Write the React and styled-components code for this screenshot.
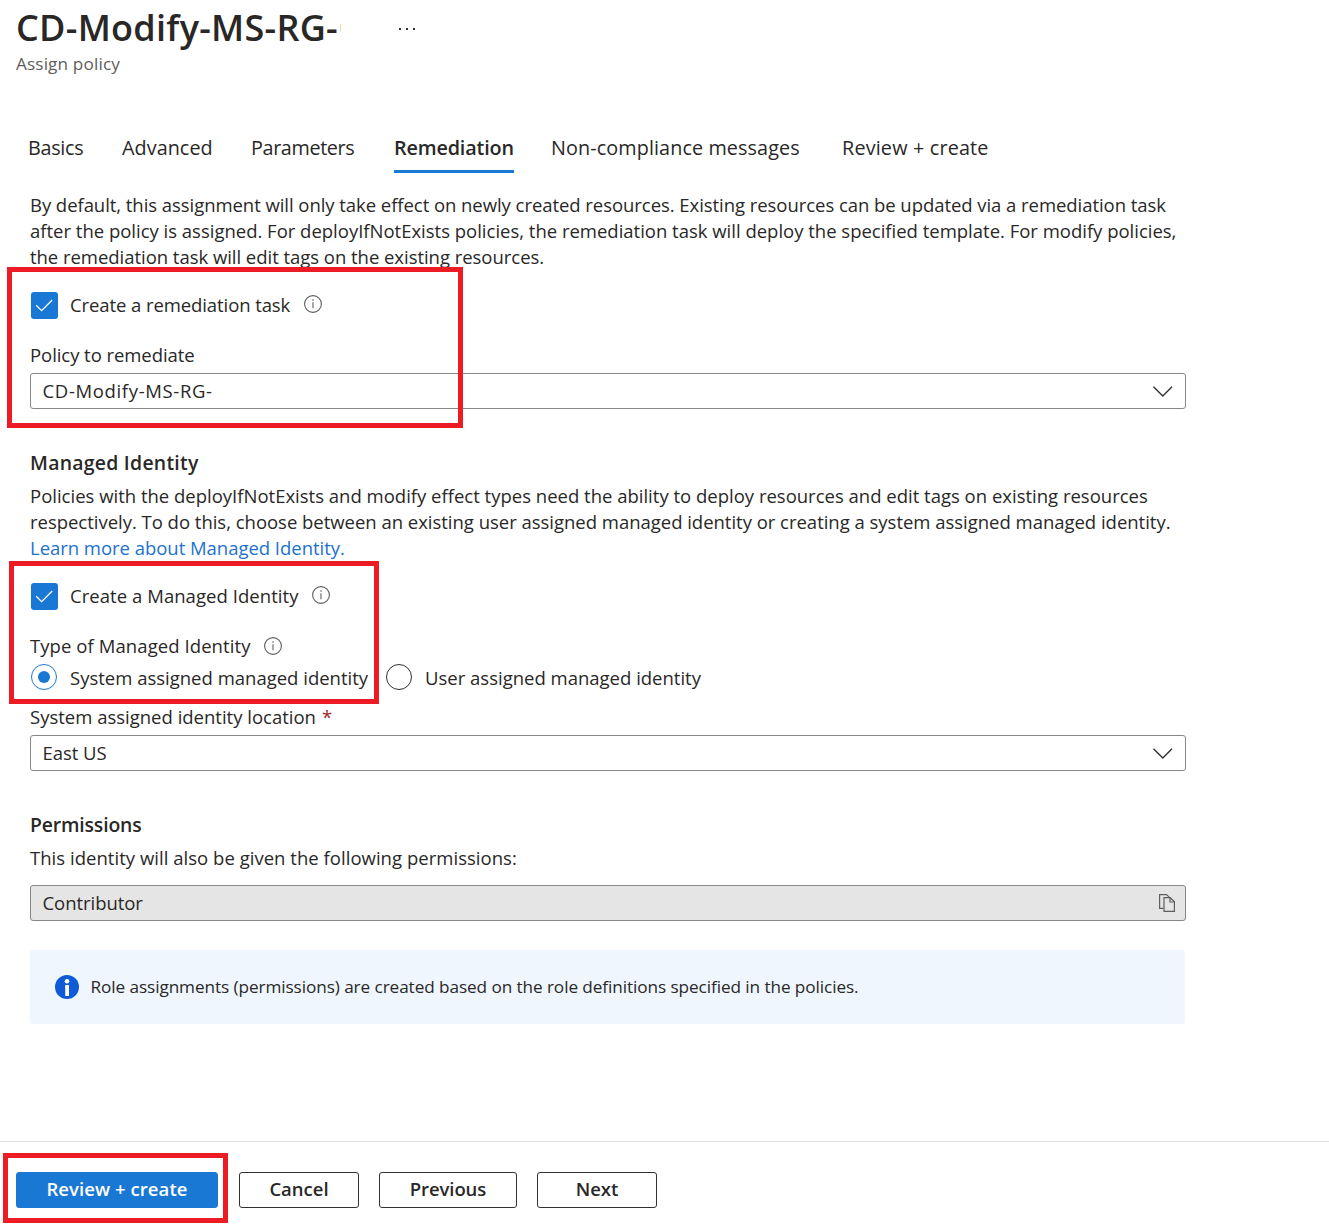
import React, { useState } from "react";
import styled, { createGlobalStyle, css } from "styled-components";

const GlobalStyle = createGlobalStyle`
  *, *::before, *::after { box-sizing: border-box; }
  body {
    margin: 0;
    background: #fff;
    color: #292827;
    font-family: "Open Sans", "Noto Sans", sans-serif;
    font-size: 18.5px;
    line-height: 26px;
  }
`;

const Page = styled.div`
  position: relative;
  width: 1329px;
  height: 1232px;
  display: flex;
  flex-direction: column;
  overflow: hidden;
`;

const Text = styled.span`
  display: ${(p) => (p.$line ? "block" : "inline")};
  white-space: nowrap;
  letter-spacing: ${(p) => p.$ls || 0}px;
`;

const Header = styled.header`
  height: 128px;
  padding: 4px 16px 0;
`;

const TitleRow = styled.div`
  display: flex;
  align-items: center;
  height: 48px;
`;

const Title = styled.h1`
  display: flex;
  align-items: center;
  width: 325px;
  margin: 0 57px 0 0;
  font-size: 36px;
  line-height: 48px;
  font-weight: 600;

  &::after {
    content: "";
    width: 1px;
    height: 8px;
    margin-left: auto;
    background: #fbdcab;
  }
`;

const Subtitle = styled.div`
  font-size: 17.2px;
  line-height: 24px;
  color: #605e5c;
`;

const Tabs = styled.nav`
  display: grid;
  grid-template-columns: 94px 129px 143px 157px 291px 160px;
  height: 45px;
  padding-left: 28px;
`;

const Tab = styled.button`
  justify-self: start;
  height: 45px;
  padding: 0 0 3px;
  border: 0;
  border-bottom: 3px solid ${(p) => (p.$active ? "#1978d4" : "transparent")};
  background: none;
  color: inherit;
  font: ${(p) => (p.$active ? 600 : 400)} 19.8px/26px "Open Sans", "Noto Sans", sans-serif;
`;

const Content = styled.main`
  display: flex;
  flex-direction: column;
  width: 1156px;
  margin-left: 30px;
  padding-top: 19px;
`;

const Paragraph = styled.p`
  margin: ${(p) => p.$top || 0}px 0 0;
`;

const Heading = styled.h2`
  margin: ${(p) => p.$top}px 0 0;
  font-size: 19.4px;
  line-height: 26px;
  font-weight: 600;
`;

const Link = styled.a`
  color: #2272d0;
  text-decoration: none;
`;

const Label = styled.div`
  display: flex;
  align-items: center;
  height: 26px;
  margin-top: ${(p) => p.$top}px;
`;

const Option = styled.label`
  display: flex;
  align-items: center;
  height: 27px;
  margin-top: ${(p) => p.$top || 0}px;
  padding-left: 1px;
`;

const OptionText = styled(Text)`
  margin-bottom: 2px;
`;

const CheckMark = styled.span`
  display: flex;
  width: 27px;
  height: 27px;
  margin-right: 12px;
  border-radius: 3px;
  background: #1978d4;
`;

const InfoMark = styled.svg`
  flex: none;
  width: 18px;
  height: 18px;
  margin: ${(p) => p.$offset};
`;

const Required = styled.span`
  margin-left: 6px;
  color: #a4262c;
`;

const RadioGroup = styled.div`
  display: grid;
  grid-template-columns: 355px auto;
  justify-content: start;
  height: 27px;
  margin-top: 5px;
`;

const Radio = styled.span`
  display: flex;
  align-items: center;
  justify-content: center;
  width: 26px;
  height: 26px;
  margin: 0 13px 2px 0;
  border: 1px solid ${(p) => (p.$on ? "#1978d4" : "#323130")};
  border-radius: 50%;
  ${(p) =>
    p.$on &&
    css`
      &::after {
        content: "";
        width: 12px;
        height: 12px;
        border-radius: 50%;
        background: #1978d4;
      }
    `}
`;

const Field = styled.div`
  display: flex;
  align-items: center;
  justify-content: space-between;
  height: 36px;
  margin-top: ${(p) => p.$top}px;
  padding: 0 ${(p) => (p.$readOnly ? 9 : 11)}px 0 11.5px;
  border: 1px solid #8a8886;
  border-radius: 3px;
  background: ${(p) => (p.$readOnly ? "#e5e5e5" : "#fff")};
`;

const Notice = styled.div`
  display: flex;
  align-items: center;
  width: 1155px;
  height: 74px;
  margin-top: 29px;
  padding-left: 25px;
  border-radius: 3px;
  background: #eff6fe;
  font-size: 17.2px;
`;

const NoticeIcon = styled.svg`
  width: 24px;
  height: 24px;
  margin-right: 11.5px;
`;

const Footer = styled.footer`
  display: flex;
  gap: 20px;
  height: 91px;
  margin-top: auto;
  padding: 30px 16px 0;
  border-top: 1px solid #e1dfdd;
`;

const Button = styled.button`
  width: ${(p) => p.$width}px;
  height: 36px;
  margin-right: ${(p) => (p.$primary ? 1 : 0)}px;
  padding: 0 0 2px;
  border: 1px solid ${(p) => (p.$primary ? "#1978d4" : "#323130")};
  border-radius: 3px;
  background: ${(p) => (p.$primary ? "#1978d4" : "#fff")};
  color: ${(p) => (p.$primary ? "#fff" : "#292827")};
  font: 600 18.5px/26px "Open Sans", "Noto Sans", sans-serif;
`;

const Highlight = styled.div`
  position: absolute;
  left: ${(p) => p.$x}px;
  top: ${(p) => p.$y}px;
  width: ${(p) => p.$w}px;
  height: ${(p) => p.$h}px;
  border: 5px solid #ed1c24;
  pointer-events: none;
`;

const Info = ({ offset }) => (
  <InfoMark viewBox="0 0 18 18" fill="none" $offset={offset}>
    <circle cx="9" cy="9" r="8.4" stroke="#605e5c" strokeWidth="1.1" />
    <path d="M9 7.3V13.2" stroke="#605e5c" strokeWidth="1.1" />
    <circle cx="9" cy="5" r="0.8" fill="#605e5c" />
  </InfoMark>
);

const Check = () => (
  <CheckMark>
    <svg width="27" height="27" viewBox="0 0 27 27" fill="none">
      <path d="M5.2 13.2L10.6 18.6L21.2 8" stroke="#fff" strokeWidth="1.3" />
    </svg>
  </CheckMark>
);

const Chevron = () => (
  <svg width="22" height="12" viewBox="0 0 22 12" fill="none">
    <path d="M1.5 1.8L10.8 10.9L20 1.8" stroke="#323130" strokeWidth="1.4" />
  </svg>
);

const Copy = () => (
  <svg width="18" height="20" viewBox="0 0 18 20" fill="none" stroke="#605e5c" strokeWidth="1.2">
    <path d="M5.5 15.4H1.6V1.6H8.5L11.6 4.6" />
    <path d="M6 4.7H12.2L16.4 8.8V18.4H6Z" />
    <path d="M12 4.8V9H16.3" />
  </svg>
);

const Dots = () => (
  <svg width="18" height="4" viewBox="0 0 18 4" fill="#323130">
    <rect x="1" y="2" width="2" height="2" />
    <rect x="8" y="2" width="2" height="2" />
    <rect x="15" y="2" width="2" height="2" />
  </svg>
);

const TABS = [
  ["Basics", -0.3],
  ["Advanced", 0.05],
  ["Parameters", -0.37],
  ["Remediation", -0.16],
  ["Non-compliance messages", 0.1],
  ["Review + create", 0.17],
];

export default function App() {
  const [active, setActive] = useState("Remediation");
  return (
    <>
      <GlobalStyle />
      <Page>
        <Header>
          <TitleRow>
            <Title><Text $ls={0.28}>CD-Modify-MS-RG-</Text></Title>
            <Dots />
          </TitleRow>
          <Subtitle><Text $ls={0.13}>Assign policy</Text></Subtitle>
        </Header>
        <Tabs>
          {TABS.map(([name, ls]) => (
            <Tab key={name} $active={name === active} onClick={() => setActive(name)}>
              <Text $ls={ls}>{name}</Text>
            </Tab>
          ))}
        </Tabs>
        <Content>
          <Paragraph>
            <Text $line $ls={-0.052}>By default, this assignment will only take effect on newly created resources. Existing resources can be updated via a remediation task</Text>
            <Text $line $ls={-0.008}>after the policy is assigned. For deployIfNotExists policies, the remediation task will deploy the specified template. For modify policies,</Text>
            <Text $line $ls={-0.035}>the remediation task will edit tags on the existing resources.</Text>
          </Paragraph>
          <Option $top={22}>
            <Check />
            <OptionText $ls={-0.09}>Create a remediation task</OptionText>
            <Info offset="0 0 3px 13.5px" />
          </Option>
          <Label $top={23}><Text $ls={-0.06}>Policy to remediate</Text></Label>
          <Field $top={5}>
            <Text $ls={0.65}>CD-Modify-MS-RG-</Text>
            <Chevron />
          </Field>
          <Heading $top={41}><Text $ls={0.27}>Managed Identity</Text></Heading>
          <Paragraph $top={7}>
            <Text $line>Policies with the deployIfNotExists and modify effect types need the ability to deploy resources and edit tags on existing resources</Text>
            <Text $line $ls={-0.02}>respectively. To do this, choose between an existing user assigned managed identity or creating a system assigned managed identity.</Text>
            <Link><Text $line $ls={-0.03}>Learn more about Managed Identity.</Text></Link>
          </Paragraph>
          <Option $top={22}>
            <Check />
            <OptionText $ls={0.05}>Create a Managed Identity</OptionText>
            <Info offset="0 0 3px 13.5px" />
          </Option>
          <Label $top={23}>
            <Text $ls={0.08}>Type of Managed Identity</Text>
            <Info offset="0 0 0 13px" />
          </Label>
          <RadioGroup>
            <Option>
              <Radio $on />
              <Text>System assigned managed identity</Text>
            </Option>
            <Option>
              <Radio />
              <Text>User assigned managed identity</Text>
            </Option>
          </RadioGroup>
          <Label $top={13}>
            <Text>System assigned identity location</Text>
            <Required>*</Required>
          </Label>
          <Field $top={5}>
            <Text $ls={-0.05}>East US</Text>
            <Chevron />
          </Field>
          <Heading $top={41}><Text $ls={-0.16}>Permissions</Text></Heading>
          <Paragraph $top={7}><Text $line $ls={0.03}>This identity will also be given the following permissions:</Text></Paragraph>
          <Field $top={14} $readOnly>
            <Text $ls={-0.05}>Contributor</Text>
            <Copy />
          </Field>
          <Notice>
            <NoticeIcon viewBox="0 0 24 24">
              <circle cx="12" cy="12" r="12" fill="#0f5bd7" />
              <circle cx="12" cy="6.2" r="2.3" fill="#fff" />
              <rect x="10.2" y="10" width="3.8" height="11" fill="#fff" />
            </NoticeIcon>
            <Text $ls={-0.085}>Role assignments (permissions) are created based on the role definitions specified in the policies.</Text>
          </Notice>
        </Content>
        <Footer>
          <Button $primary $width={202}><Text $ls={0.07}>Review + create</Text></Button>
          <Button $width={120}><Text>Cancel</Text></Button>
          <Button $width={138}><Text $ls={-0.1}>Previous</Text></Button>
          <Button $width={120}><Text>Next</Text></Button>
        </Footer>
        <Highlight $x={7} $y={267} $w={456} $h={161} />
        <Highlight $x={9} $y={561} $w={370} $h={143} />
        <Highlight $x={3} $y={1153} $w={225} $h={70} />
      </Page>
    </>
  );
}
